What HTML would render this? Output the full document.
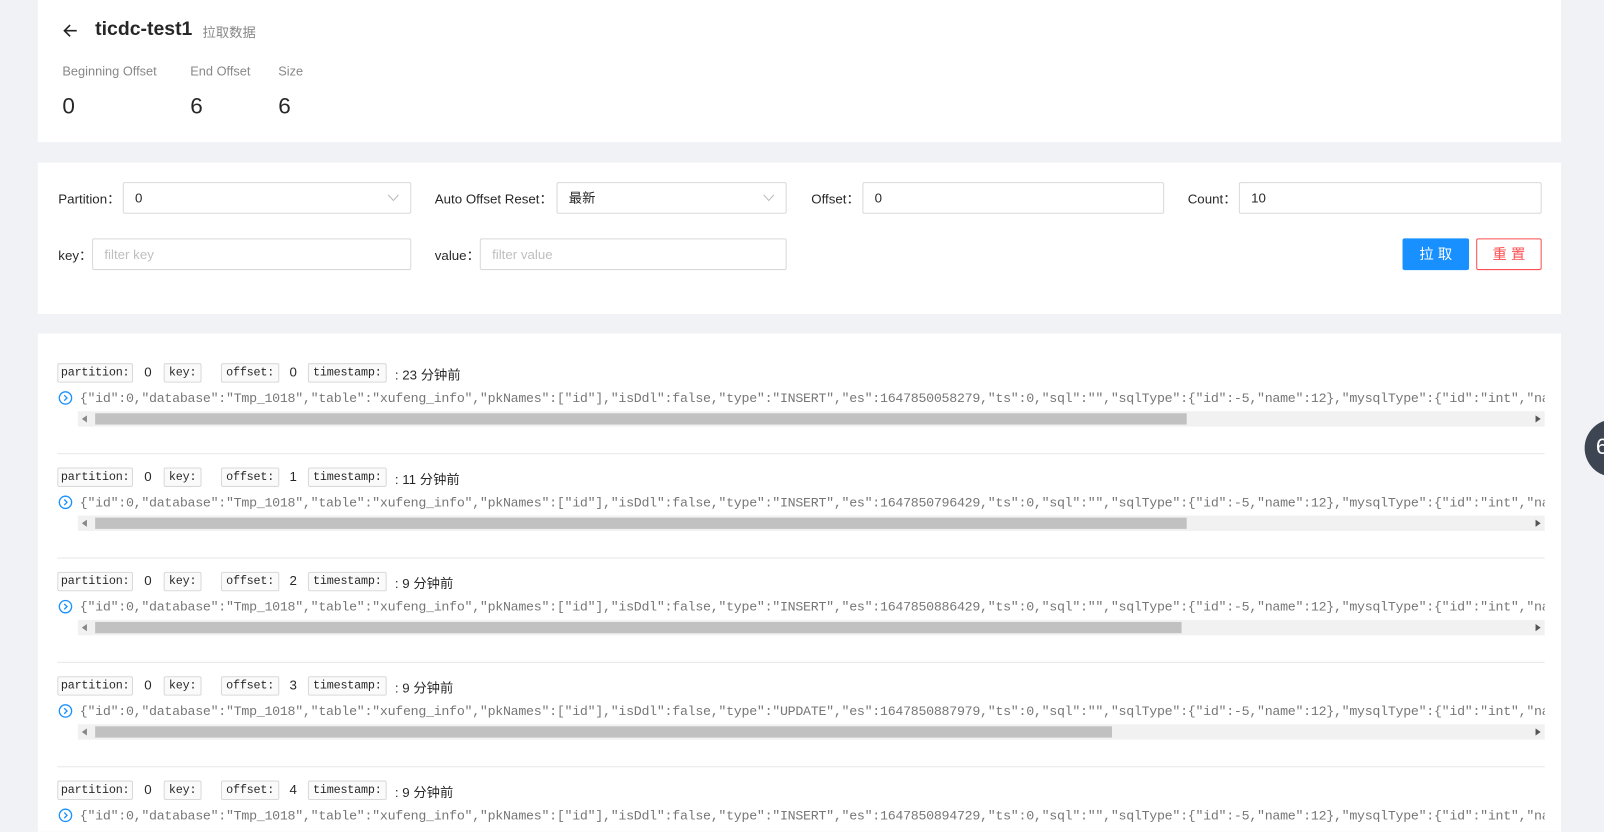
<!DOCTYPE html>
<html><head><meta charset="utf-8"><style>
*{box-sizing:border-box;margin:0;padding:0}
body{width:1604px;height:813px;background:#f0f2f5;font-family:"Liberation Sans","Noto Sans CJK SC",sans-serif;overflow:hidden;color:rgba(0,0,0,.85)}
#w{position:absolute;left:0;top:0;width:1568px;height:795px;transform:scale(1.023);transform-origin:0 0}
.a{position:absolute}
.card{position:absolute;left:37px;width:1489px;background:#fff}
.lbl{font-size:13px;color:rgba(0,0,0,.85);position:absolute}
.inp{position:absolute;height:31px;border:1px solid #d9d9d9;border-radius:2px;font-size:13px;padding:6px 11px;line-height:17px;background:#fff}
.ph{color:#bfbfbf}
.tag{position:absolute;height:19px;border:1px solid #d9d9d9;background:#fafafa;border-radius:2px;font-family:"Liberation Mono",monospace;font-size:11.5px;line-height:17px;text-align:center;color:rgba(0,0,0,.85);letter-spacing:-0.2px}
.num{position:absolute;font-size:13px}
.json{position:absolute;left:78px;width:1432px;overflow:hidden;white-space:nowrap;font-family:"Liberation Mono",monospace;font-size:13px;letter-spacing:-0.28px;color:#777}
.track{position:absolute;left:76px;width:1434px;height:15px;background:#f1f1f1}
.thumb{position:absolute;left:17px;top:2px;height:11px;background:#c1c1c1}
.sep{position:absolute;left:56px;width:1454px;height:1px;background:#e8e8e8}
</style></head><body><div id="w">
<div class="card" style="top:0;height:139px">
<svg class="a" style="left:24px;top:22px" width="16" height="16" viewBox="0 0 16 16"><path d="M14 8H2M7.5 2.5L2 8l5.5 5.5" stroke="#222" stroke-width="1.6" fill="none"/></svg>
<div class="a" style="left:56px;top:18px;font-size:19px;font-weight:bold;color:rgba(0,0,0,.85)">ticdc-test1</div>
<div class="a" style="left:161px;top:21px;font-size:13px;color:#888">拉取数据</div>
<div class="a" style="left:24px;top:63px;font-size:12.5px;color:#888">Beginning Offset</div>
<div class="a" style="left:149px;top:63px;font-size:12.5px;color:#888">End Offset</div>
<div class="a" style="left:235px;top:63px;font-size:12.5px;color:#888">Size</div>
<div class="a" style="left:24px;top:91px;font-size:22px">0</div>
<div class="a" style="left:149px;top:91px;font-size:22px">6</div>
<div class="a" style="left:235px;top:91px;font-size:22px">6</div>
</div>
<div class="card" style="top:159px;height:148px"></div>
<div class="lbl" style="left:57px;top:184px">Partition：</div>
<div class="inp" style="left:120px;top:178px;width:282px">0<svg class="a" style="right:11px;top:11px" width="11" height="7"><path d="M0.5 0.5L5.5 6L10.5 0.5" stroke="#bbb" fill="none"/></svg></div>
<div class="lbl" style="left:425px;top:184px">Auto Offset Reset：</div>
<div class="inp" style="left:544px;top:178px;width:225px">最新<svg class="a" style="right:11px;top:11px" width="11" height="7"><path d="M0.5 0.5L5.5 6L10.5 0.5" stroke="#bbb" fill="none"/></svg></div>
<div class="lbl" style="left:793px;top:184px">Offset：</div>
<div class="inp" style="left:843px;top:178px;width:295px">0</div>
<div class="lbl" style="left:1161px;top:184px">Count：</div>
<div class="inp" style="left:1211px;top:178px;width:296px">10</div>
<div class="lbl" style="left:57px;top:239px">key：</div>
<div class="inp ph" style="left:90px;top:233px;width:312px">filter key</div>
<div class="lbl" style="left:425px;top:239px">value：</div>
<div class="inp ph" style="left:469px;top:233px;width:300px">filter value</div>
<div class="a" style="left:1371px;top:233px;width:65px;height:31px;background:#1890ff;border-radius:2px;color:#fff;font-size:14px;text-align:center;line-height:31px;letter-spacing:4px;padding-left:4px">拉取</div>
<div class="a" style="left:1443px;top:233px;width:64px;height:31px;border:1px solid #ff4d4f;border-radius:2px;color:#ff4d4f;font-size:14px;text-align:center;line-height:29px;letter-spacing:4px;padding-left:4px">重置</div>
<div class="card" style="top:326px;height:487px"></div>
<div id="recs"></div>
<div class="a" style="left:1549px;top:410px;width:70px;height:56px;border-radius:28px;background:#3d4452"></div>
<div class="a" style="left:1560px;top:424px;color:#fff;font-size:22px">6</div>
</div>
<script>
var data=[[0,"23","INSERT","1647850058279",1067],[1,"11","INSERT","1647850796429",1067],[2,"9","INSERT","1647850886429",1062],[3,"9","UPDATE","1647850887979",994],[4,"9","INSERT","1647850894729",994]];
var h="";
data.forEach(function(d,i){var y=355+i*102;
h+='<div class="tag" style="left:56px;top:'+y+'px;width:74px">partition:</div><div class="num" style="left:141px;top:'+(y+1)+'px">0</div>'+
'<div class="tag" style="left:160px;top:'+y+'px;width:37px">key:</div>'+
'<div class="tag" style="left:216px;top:'+y+'px;width:57px">offset:</div><div class="num" style="left:283px;top:'+(y+1)+'px">'+d[0]+'</div>'+
'<div class="tag" style="left:301px;top:'+y+'px;width:77px">timestamp:</div><div class="num" style="left:386px;top:'+(y+1)+'px">: '+d[1]+' 分钟前</div>'+
'<svg class="a" style="left:57px;top:'+(y+27)+'px" width="14" height="14"><circle cx="7" cy="7" r="6" stroke="#1890ff" stroke-width="1.3" fill="none"/><path d="M5.8 4.3L8.5 7L5.8 9.7" stroke="#1890ff" stroke-width="1.3" fill="none"/></svg>'+
'<div class="json" style="top:'+(y+27)+'px">{"id":0,"database":"Tmp_1018","table":"xufeng_info","pkNames":["id"],"isDdl":false,"type":"'+d[2]+'","es":'+d[3]+',"ts":0,"sql":"","sqlType":{"id":-5,"name":12},"mysqlType":{"id":"int","name":"varchar"}}</div>';
if(i<4)h+='<div class="track" style="top:'+(y+47)+'px"><div class="thumb" style="width:'+d[4]+'px"></div><svg class="a" style="left:4px;top:4px" width="5" height="7"><path d="M5 0L0 3.5L5 7z" fill="#888"/></svg><svg class="a" style="right:4px;top:4px" width="5" height="7"><path d="M0 0L5 3.5L0 7z" fill="#555"/></svg></div><div class="sep" style="top:'+(y+88)+'px"></div>';
});
document.getElementById("recs").innerHTML=h;
</script>
</body></html>
